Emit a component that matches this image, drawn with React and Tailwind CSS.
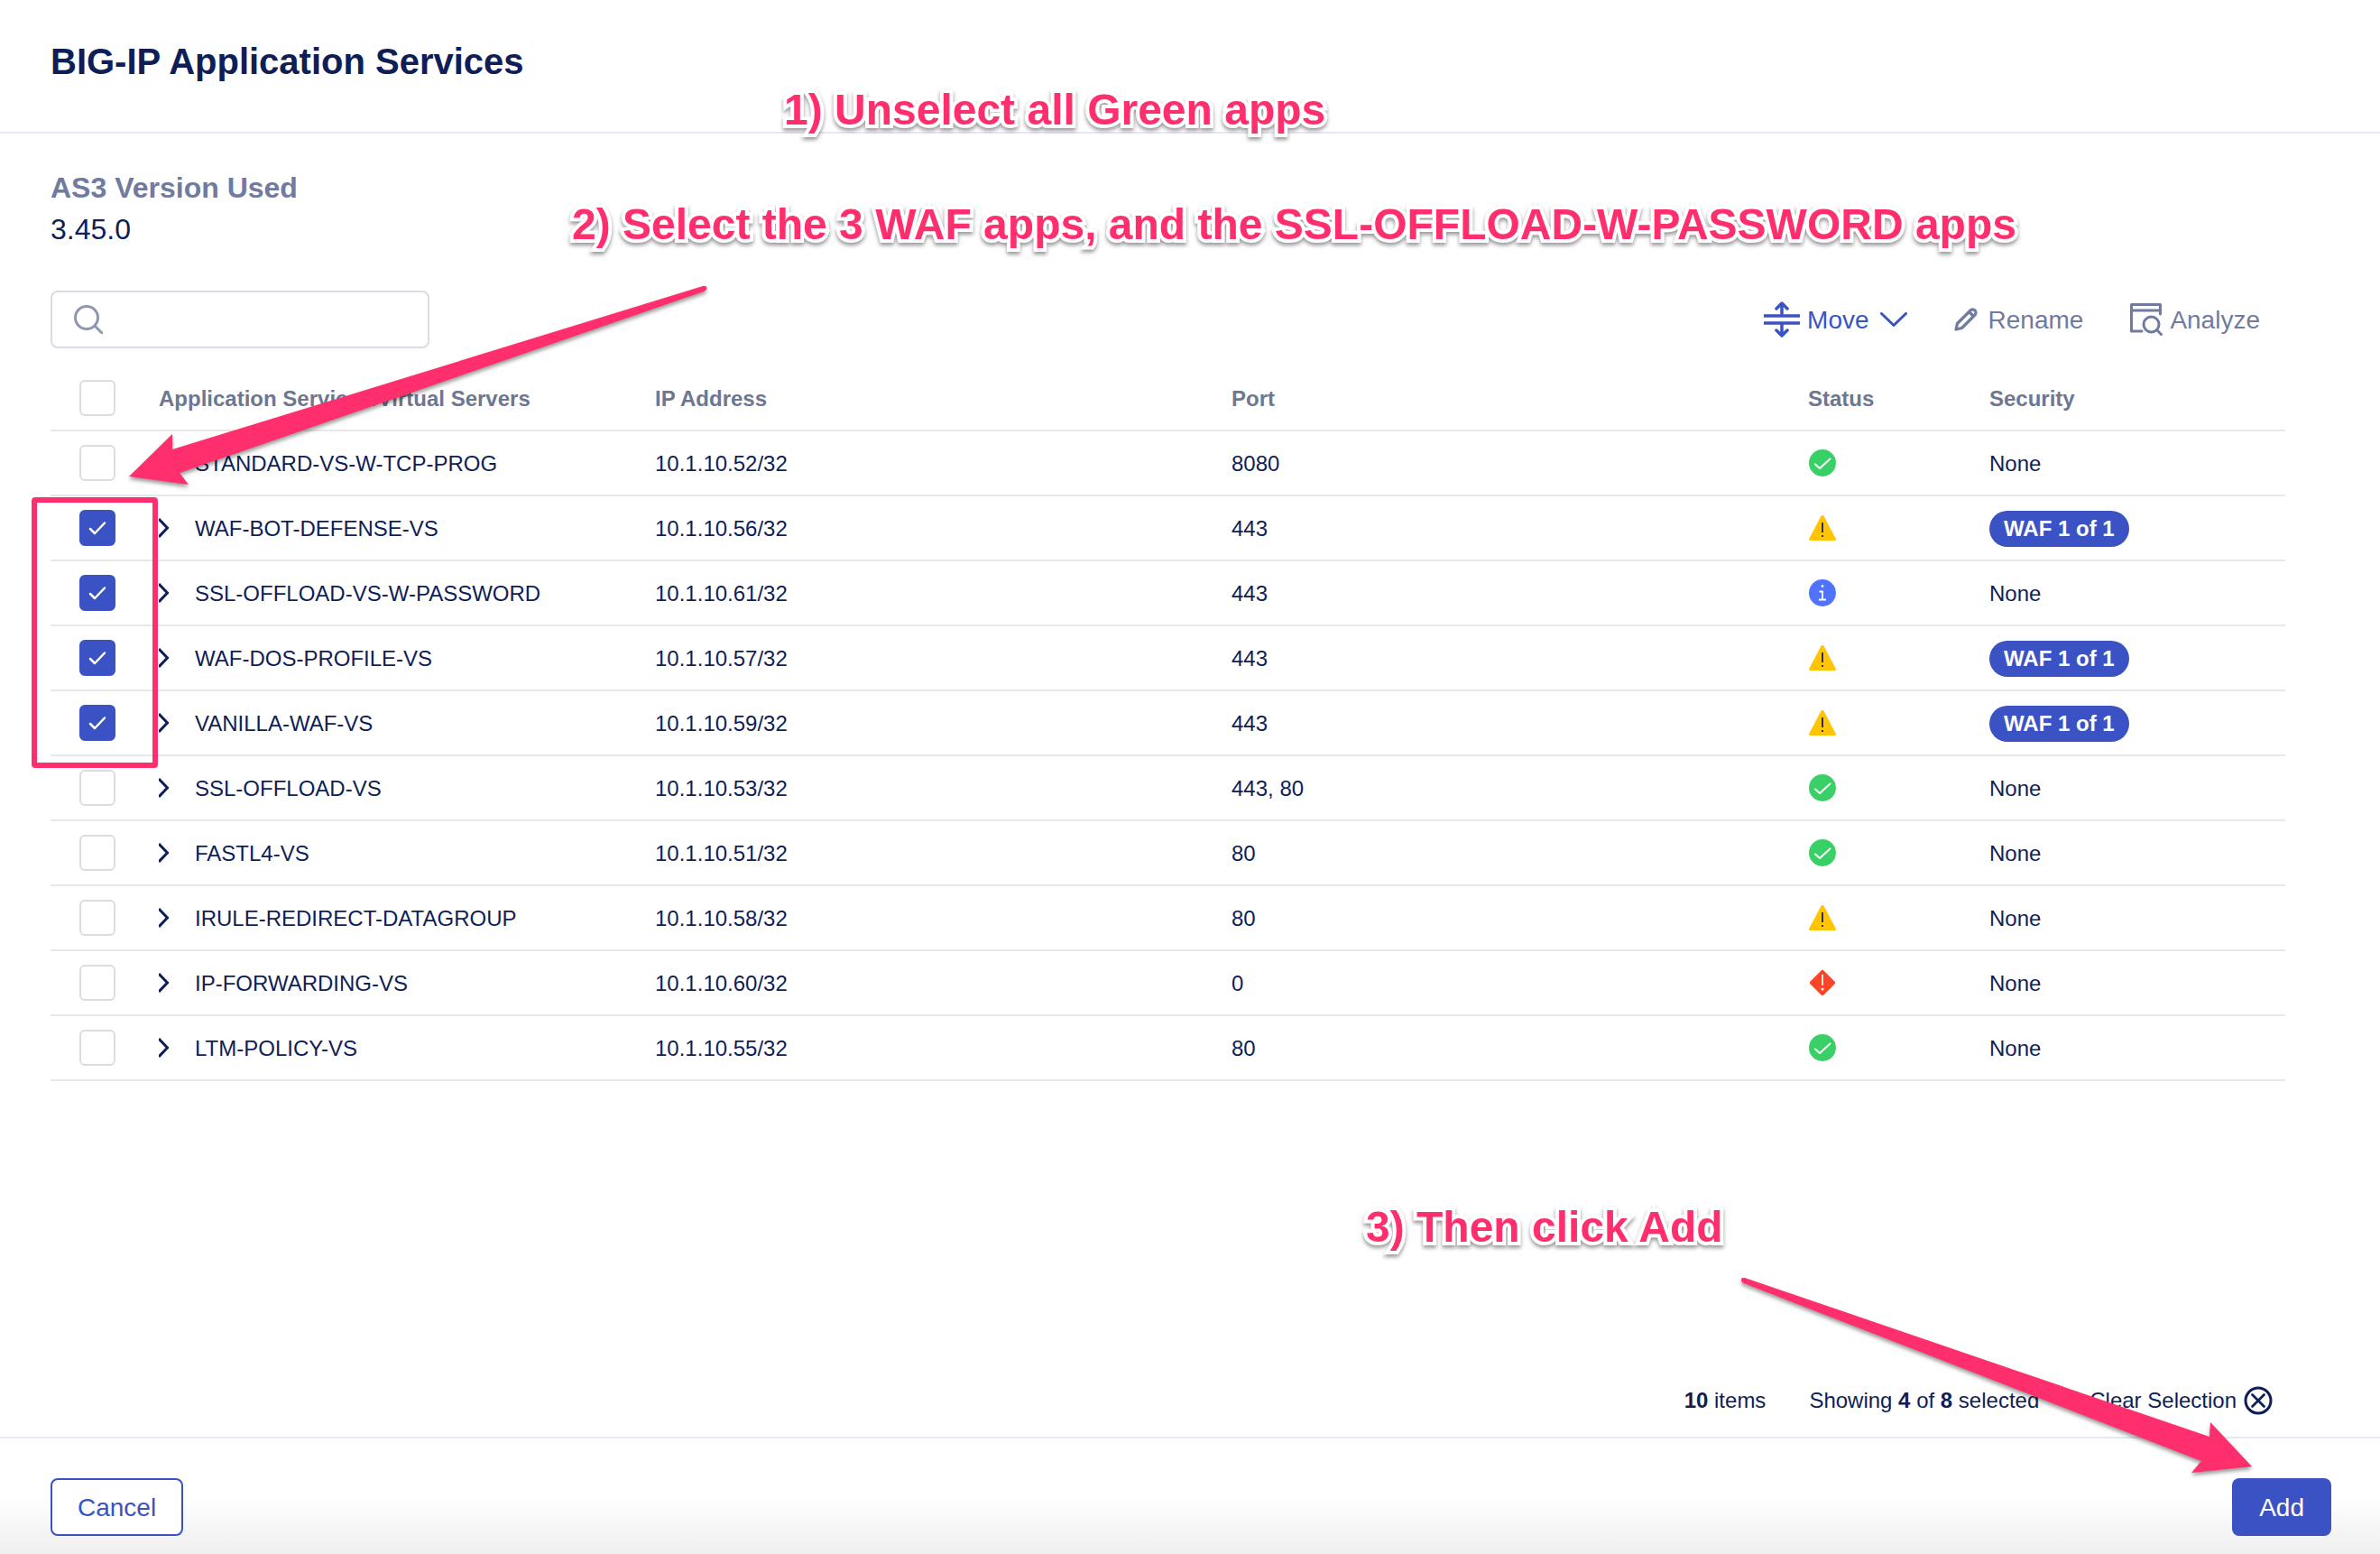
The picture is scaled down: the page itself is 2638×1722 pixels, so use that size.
import React, { useState } from "react";

const PINK = "#ff2f6d";

const apps = [
  { name: "STANDARD-VS-W-TCP-PROG", ip: "10.1.10.52/32", port: "8080", status: "ok", waf: false, on: false },
  { name: "WAF-BOT-DEFENSE-VS", ip: "10.1.10.56/32", port: "443", status: "warn", waf: true, on: true },
  { name: "SSL-OFFLOAD-VS-W-PASSWORD", ip: "10.1.10.61/32", port: "443", status: "info", waf: false, on: true },
  { name: "WAF-DOS-PROFILE-VS", ip: "10.1.10.57/32", port: "443", status: "warn", waf: true, on: true },
  { name: "VANILLA-WAF-VS", ip: "10.1.10.59/32", port: "443", status: "warn", waf: true, on: true },
  { name: "SSL-OFFLOAD-VS", ip: "10.1.10.53/32", port: "443, 80", status: "ok", waf: false, on: false },
  { name: "FASTL4-VS", ip: "10.1.10.51/32", port: "80", status: "ok", waf: false, on: false },
  { name: "IRULE-REDIRECT-DATAGROUP", ip: "10.1.10.58/32", port: "80", status: "warn", waf: false, on: false },
  { name: "IP-FORWARDING-VS", ip: "10.1.10.60/32", port: "0", status: "error", waf: false, on: false },
  { name: "LTM-POLICY-VS", ip: "10.1.10.55/32", port: "80", status: "ok", waf: false, on: false },
];

function StatusIcon({ kind }) {
  return (
    <svg width="32" height="32" viewBox="0 0 32 32" role="img" aria-label={kind} className="block">
      {kind === "ok" && (
        <>
          <circle cx="16" cy="16" r="15" fill="#38d067" />
          <path d="M8 17.500l5 4.500L24.500 11.500" fill="none" stroke="#fff" strokeWidth="2" strokeLinecap="round" strokeLinejoin="round" />
        </>
      )}
      {kind === "warn" && (
        <>
          <path d="M14.400 3a1.900 1.900 0 0 1 3.200 0L30.800 28a1.300 1.300 0 0 1-1.200 2H2.400a1.300 1.300 0 0 1-1.200-2z" fill="#ffc402" />
          <path d="M16 10v11M16 24v2" stroke="#0f1e57" strokeWidth="1.800" />
        </>
      )}
      {kind === "info" && (
        <>
          <circle cx="16" cy="16" r="15" fill="#4f73ff" />
          <circle cx="16" cy="8.500" r="1.400" fill="#fff" />
          <path d="M12.500 14.500H16V23M12 23.500h8" fill="none" stroke="#fff" strokeWidth="1.800" />
        </>
      )}
      {kind === "error" && (
        <>
          <rect x="5.500" y="5.500" width="21" height="21" rx="2" fill="#fb4526" transform="rotate(45 16 16)" />
          <path d="M16 7v12" stroke="#fff" strokeWidth="1.800" />
          <circle cx="16" cy="23" r="1.500" fill="#fff" />
        </>
      )}
    </svg>
  );
}

function Tick({ label, checked, onChange }) {
  return (
    <label className="relative block size-10">
      <input
        type="checkbox"
        aria-label={label}
        checked={checked}
        onChange={onChange}
        className="peer block size-10 appearance-none rounded-md border-2 border-[#dadde4] bg-white checked:border-[#3b52c4] checked:bg-[#3b52c4]"
      />
      <svg viewBox="0 0 40 40" className="pointer-events-none absolute inset-0 hidden size-10 peer-checked:block">
        <path d="M12 21l5 5 11-11.500" fill="none" stroke="#fff" strokeWidth="2.500" strokeLinecap="round" strokeLinejoin="round" />
      </svg>
    </label>
  );
}

function Note({ className, children }) {
  return (
    <p className={"pointer-events-none absolute whitespace-nowrap " + className}>
      <span
        className="relative text-5xl leading-[56px] font-bold text-[#ff2f6d] [-webkit-text-stroke:8px_white] [paint-order:stroke_fill] [stroke-linejoin:round] [filter:drop-shadow(0_3px_2px_rgb(0_0_0/0.4))]"
      >
        {children}
      </span>
    </p>
  );
}

const th = "h-[72px] border-b-2 border-[#e7e8ee] p-0 text-left align-middle font-bold text-[#6d7791]";
const td = "h-[72px] border-b-2 border-[#e7e8ee] p-0 align-middle";

export default function App() {
  const [rows, setRows] = useState(apps);
  const toggle = (i) => setRows(rows.map((r, k) => (k === i ? { ...r, on: !r.on } : r)));
  const clear = () => setRows(rows.map((r) => ({ ...r, on: false })));
  const selected = rows.filter((r) => r.on).length;

  return (
    <div className="relative flex min-h-screen flex-col overflow-hidden bg-white font-['Liberation_Sans',Arial,sans-serif] text-2xl text-[#0f1e57]">
      <header className="flex h-[148px] items-center border-b-2 border-[#e5e9f4] px-14 pb-2.5">
        <h1 className="text-[40px] leading-[48px] font-bold">BIG-IP Application Services</h1>
      </header>

      <main className="flex flex-1 flex-col pt-10 pr-[105px] pl-14">
        <dl>
          <dt className="text-[32px] leading-10 font-bold text-[#717aa0]">AS3 Version Used</dt>
          <dd className="mt-1.5 text-[32px] leading-10">3.45.0</dd>
        </dl>

        <div className="mt-12 flex items-center justify-between">
          <label className="flex h-16 w-[420px] items-center gap-3 rounded-lg border-2 border-[#d9dce6] px-6">
            <svg width="32" height="32" viewBox="0 0 32 32" fill="none" stroke="#8f97b5" strokeWidth="3" strokeLinecap="round" className="shrink-0">
              <circle cx="14" cy="14" r="12.500" />
              <path d="M23 23l8 8" />
            </svg>
            <input type="search" aria-label="Search" className="w-full min-w-0 bg-transparent outline-none" />
          </label>
          <div className="flex items-center gap-[52px] pr-7 text-[28px] text-[#717aa0]">
            <button className="flex items-center gap-2 text-[#3b52c4]">
              <svg width="40" height="40" viewBox="0 0 40 40" fill="none" stroke="currentColor" strokeWidth="3.500">
                <path d="M0 16h40M0 24h40M20 2v14M20 24v14" />
                <path d="M14 8l6-6 6 6M14 32l6 6 6-6" strokeLinecap="round" strokeLinejoin="round" />
              </svg>
              <span className="pt-0.5">Move</span>
              <svg width="30" height="16" viewBox="0 0 30 16" fill="none" stroke="currentColor" strokeWidth="3" strokeLinecap="round" strokeLinejoin="round" className="ml-1">
                <path d="M1.500 1.500l13.500 13 13.500-13" />
              </svg>
            </button>
            <button className="flex items-center gap-3">
              <svg width="26" height="26" viewBox="0 0 26 26" fill="none" stroke="currentColor" strokeWidth="3.200" strokeLinejoin="round">
                <path d="M2 24l1.500-6.500L18 3a3.400 3.400 0 0 1 5 5L8.500 22.500zM17 5l4.500 4.500" />
              </svg>
              <span className="pt-0.5">Rename</span>
            </button>
            <button className="flex items-center gap-2">
              <svg width="36" height="36" viewBox="0 0 36 36" fill="none" stroke="currentColor" strokeWidth="3" strokeLinejoin="round">
                <path d="M13 31H1.500V1.500h32V12" strokeLinecap="round" />
                <path d="M2 8h31" />
                <circle cx="23.500" cy="23.500" r="8.500" />
                <path d="M29.500 29.500l6 6" />
              </svg>
              <span className="pt-0.5">Analyze</span>
            </button>
          </div>
        </div>

        <table className="mt-5 w-full table-fixed border-separate border-spacing-0">
          <colgroup>
            <col className="w-[120px]" />
            <col className="w-[550px]" />
            <col />
            <col />
            <col className="w-[201px]" />
            <col className="w-[328px]" />
          </colgroup>
          <thead>
            <tr>
              <th className={th + " pl-8"}>
                <Tick label="Select all" checked={false} onChange={() => setRows(rows.map((r) => ({ ...r, on: true })))} />
              </th>
              <th className={th + " pt-0.5"}>Application Services/Virtual Servers</th>
              <th className={th + " pt-0.5"}>IP Address</th>
              <th className={th + " pt-0.5"}>Port</th>
              <th className={th + " pt-0.5"}>Status</th>
              <th className={th + " pt-0.5"}>Security</th>
            </tr>
          </thead>
          <tbody>
            {rows.map((r, i) => (
              <tr key={r.name}>
                <td className={td + " pl-8"}>
                  <Tick label={"Select " + r.name} checked={r.on} onChange={() => toggle(i)} />
                </td>
                <td className={td}>
                  <div className="flex items-center">
                    <button aria-label={"Expand " + r.name} className="w-10">
                      <svg width="14" height="24" viewBox="0 0 14 24" fill="none" stroke="currentColor" strokeWidth="3">
                        <path d="M0 2l9.500 10L0 22" />
                      </svg>
                    </button>
                    <span className="pt-0.5">{r.name}</span>
                  </div>
                </td>
                <td className={td + " pt-0.5"}>{r.ip}</td>
                <td className={td + " pt-0.5"}>{r.port}</td>
                <td className={td}>
                  <StatusIcon kind={r.status} />
                </td>
                <td className={td + " pt-0.5"}>
                  {r.waf ? (
                    <span className="block w-fit rounded-full bg-[#3b52c4] px-4 leading-10 font-bold text-white">WAF 1 of 1</span>
                  ) : (
                    "None"
                  )}
                </td>
              </tr>
            ))}
          </tbody>
        </table>

        <div className="mt-auto flex items-center justify-end gap-12 pr-3.5 pb-6">
          <span><b>10</b> items</span>
          <span>Showing <b>{selected}</b> of <b>8</b> selected</span>
          <button onClick={clear} className="ml-2 flex items-center gap-2">
            Clear Selection
            <svg width="32" height="32" viewBox="0 0 32 32" fill="none" stroke="currentColor" strokeWidth="3">
              <circle cx="16" cy="16" r="14" />
              <path d="M9.500 9.500l13 13M22.500 9.500l-13 13" strokeWidth="2.800" strokeLinecap="round" />
            </svg>
          </button>
        </div>
      </main>

      <footer className="flex h-[130px] items-center justify-between border-t-2 border-[#e5e9f4] bg-linear-to-b from-white from-50% to-[#efefef] pt-6 pr-[54px] pl-14 text-[28px]">
        <button className="h-16 rounded-lg border-2 border-[#3b52c4] bg-white px-7 pt-0.5 text-[#3b52c4]">Cancel</button>
        <button className="h-16 rounded-lg bg-[#3b52c4] px-[30px] pt-0.5 text-white">Add</button>
      </footer>

      <Note className="top-[94px] left-[869px]">1) Unselect all Green apps</Note>
      <Note className="top-[221px] left-[634px]">2) Select the 3 WAF apps, and the SSL-OFFLOAD-W-PASSWORD apps</Note>
      <Note className="top-[1332px] left-[1514px]">3) Then click Add</Note>

      <div className="pointer-events-none absolute top-[551px] left-[35px] h-[300px] w-[140px] rounded-sm border-6 border-[#ff2f6d]" />
      <svg width="650" height="230" viewBox="0 0 650 230" className="pointer-events-none absolute top-[310px] left-[138px] drop-shadow-[0_3px_2px_rgb(0_0_0/0.4)]">
        <path d="M5 218L53 171V188L641 7Q646 6 645 10Q645 12 642 13L61 214L71 227z" fill={PINK} />
      </svg>
      <svg width="600" height="230" viewBox="0 0 600 230" className="pointer-events-none absolute top-[1410px] right-[118px] drop-shadow-[0_3px_2px_rgb(0_0_0/0.4)]">
        <path d="M14 6Q10 5 10 8Q10 11 13 12L520 209L509 222L576 215L530 166L529 182z" fill={PINK} />
      </svg>
    </div>
  );
}
